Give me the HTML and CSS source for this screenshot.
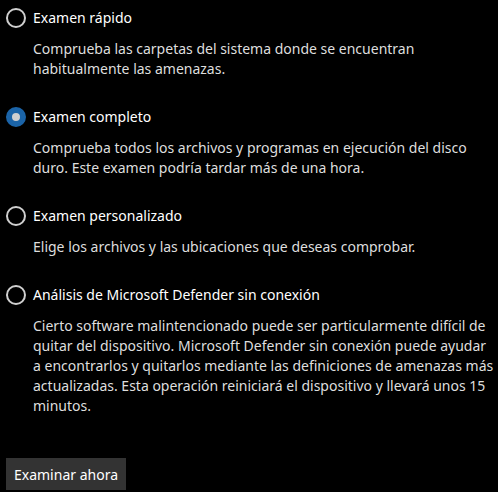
FILE: index.html
```html
<!DOCTYPE html>
<html lang="es">
<head>
<meta charset="utf-8">
<link rel="stylesheet" href="styles.css">
</head>
<body>
<div class="page">
  <div class="option">
    <div class="row"><span class="radio"></span><span class="title">Examen rápido</span></div>
    <p class="desc">Comprueba las carpetas del sistema donde se encuentran habitualmente las amenazas.</p>
  </div>
  <div class="option">
    <div class="row"><span class="radio checked"></span><span class="title">Examen completo</span></div>
    <p class="desc">Comprueba todos los archivos y programas en ejecución del disco duro. Este examen podría tardar más de una hora.</p>
  </div>
  <div class="option">
    <div class="row"><span class="radio"></span><span class="title">Examen personalizado</span></div>
    <p class="desc">Elige los archivos y las ubicaciones que deseas comprobar.</p>
  </div>
  <div class="option">
    <div class="row"><span class="radio"></span><span class="title">Análisis de Microsoft Defender sin conexión</span></div>
    <p class="desc">Cierto software malintencionado puede ser particularmente difícil de quitar del dispositivo. Microsoft Defender sin conexión puede ayudar a&nbsp;encontrarlos y quitarlos mediante las definiciones de amenazas más actualizadas. Esta operación reiniciará el dispositivo y llevará unos 15 minutos.</p>
  </div>
  <button class="scan">Examinar ahora</button>
</div>
</body>
</html>
```

FILE: styles.css
```css
html, body {
  margin: 0;
  padding: 0;
  background: #000;
}
.page {
  padding: 8px 0 0 6px;
  font-family: "Noto Sans", "Open Sans", sans-serif;
  font-size: 14px;
  line-height: 20px;
  color: #fff;
}
.option {
  margin-bottom: 28px;
}
.row {
  display: flex;
  align-items: center;
  gap: 7px;
  height: 20px;
}
.radio {
  box-sizing: border-box;
  width: 20px;
  height: 20px;
  border: 2px solid #cfcfcf;
  border-radius: 50%;
  flex: none;
}
.radio.checked {
  border: 6px solid #1b64a8;
  background: #d0d0d0;
}
.title {
  color: #fff;
}
.desc {
  margin: 11px 0 0 27px;
  color: #dedede;
  width: 465px;
}
.scan {
  margin-top: 14px;
  width: 120px;
  height: 32px;
  border: none;
  background: #333;
  color: #fff;
  font-family: inherit;
  font-size: 14px;
  padding: 0;
}
```
